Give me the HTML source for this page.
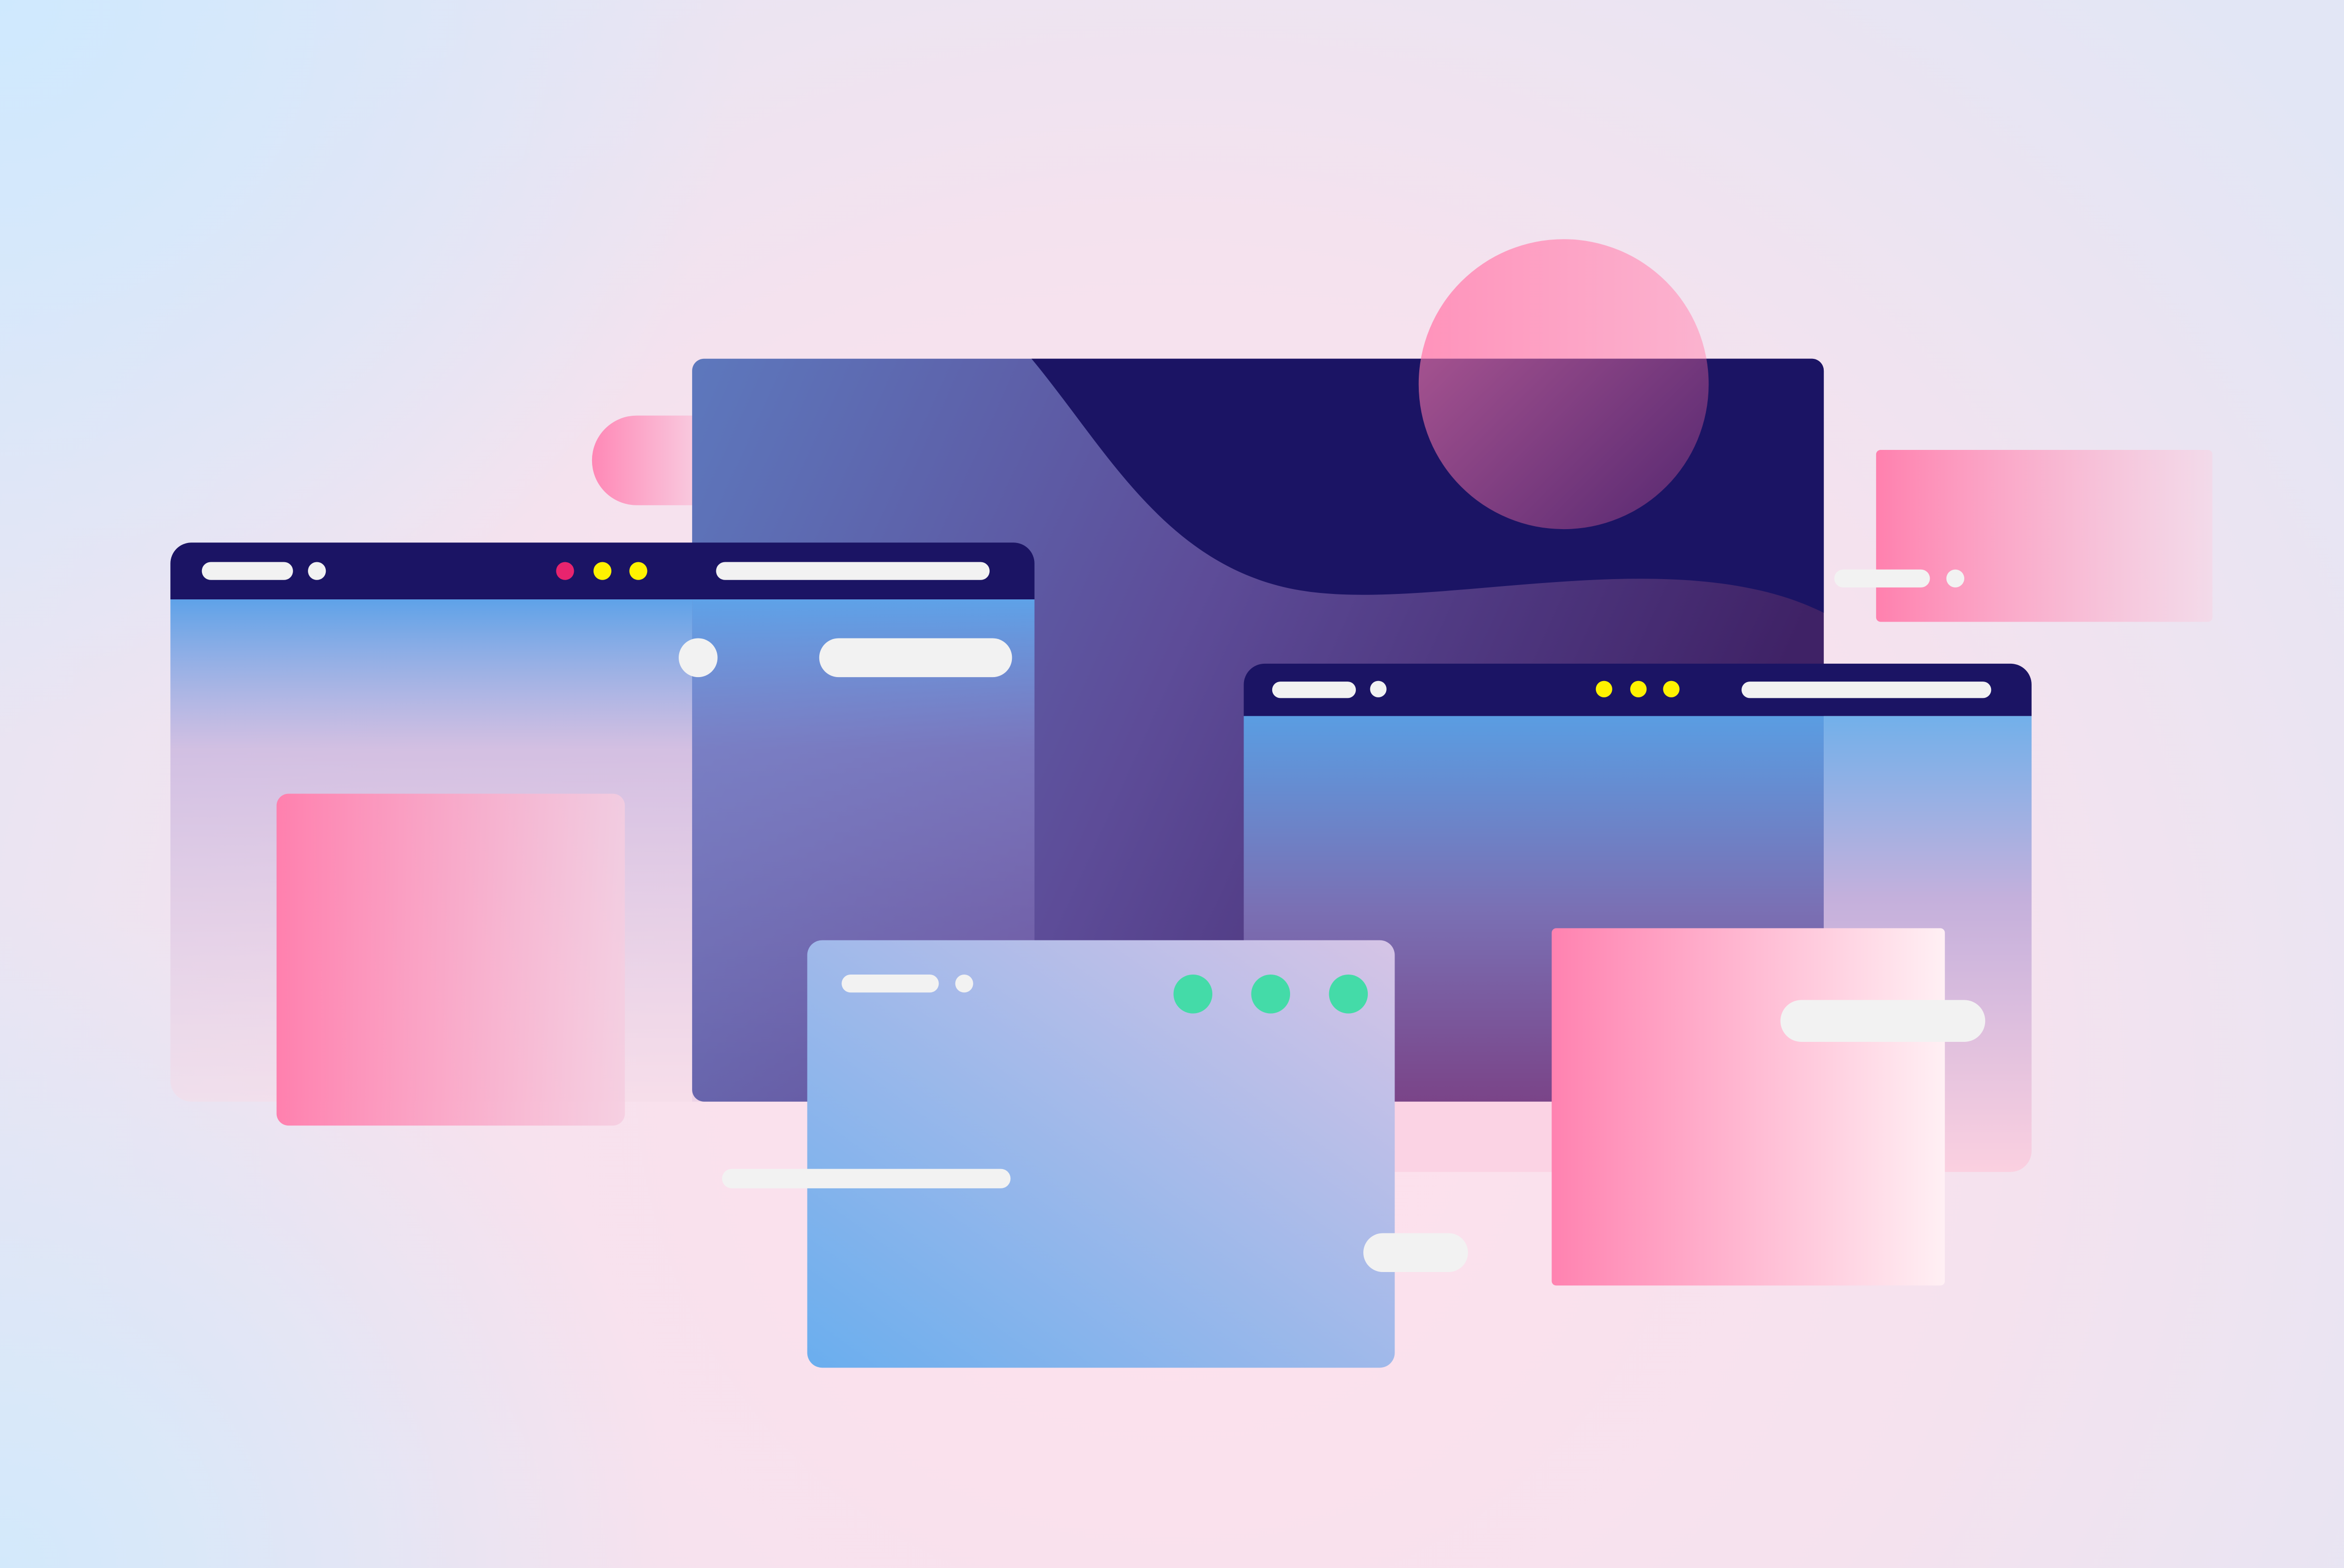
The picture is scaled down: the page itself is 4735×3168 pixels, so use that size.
<!DOCTYPE html>
<html><head><meta charset="utf-8"><style>
html,body{margin:0;padding:0;width:4735px;height:3168px;overflow:hidden}
svg{display:block}
</style></head><body>
<svg width="4735" height="3168" viewBox="0 0 1568 1049" preserveAspectRatio="none" xmlns="http://www.w3.org/2000/svg">
<defs>
<radialGradient id="bg" cx="784" cy="720" r="1000" gradientUnits="userSpaceOnUse">
<stop offset="0" stop-color="#ffe0ec"/><stop offset="0.55" stop-color="#f5e2ee"/><stop offset="1" stop-color="#e2e6f5"/></radialGradient>
<radialGradient id="tl" cx="0" cy="0" r="500" gradientUnits="userSpaceOnUse">
<stop offset="0" stop-color="#cfe9fe"/><stop offset="1" stop-color="#cfe9fe" stop-opacity="0"/></radialGradient>
<radialGradient id="bl" cx="0" cy="1049" r="450" gradientUnits="userSpaceOnUse">
<stop offset="0" stop-color="#d3e9fb"/><stop offset="1" stop-color="#d3e9fb" stop-opacity="0"/></radialGradient>
<linearGradient id="main" x1="0" y1="0" x2="1" y2="0.3">
<stop offset="0" stop-color="#5d78bd"/><stop offset="0.5" stop-color="#5d4c98"/><stop offset="1" stop-color="#3f2266"/></linearGradient>
<linearGradient id="circTop" x1="0" y1="0" x2="1" y2="0"><stop offset="0" stop-color="#ff93bb"/><stop offset="1" stop-color="#fbb3cf"/></linearGradient>
<linearGradient id="circIn" x1="0" y1="0" x2="1" y2="1"><stop offset="0" stop-color="#d46aa0"/><stop offset="1" stop-color="#5e2a72"/></linearGradient>
<linearGradient id="pillL" x1="0" y1="0" x2="1" y2="0"><stop offset="0" stop-color="#ff88b6"/><stop offset="1" stop-color="#f8cfe2"/></linearGradient>
<linearGradient id="lwin" x1="0" y1="0" x2="0" y2="1">
<stop offset="0" stop-color="#5ea2e8" stop-opacity="1"/><stop offset="0.3" stop-color="#c8b4de" stop-opacity="0.75"/><stop offset="1" stop-color="#f5dce8" stop-opacity="0.6"/></linearGradient>
<linearGradient id="lwinO" x1="0" y1="0" x2="0" y2="1">
<stop offset="0" stop-color="#5ea2e8" stop-opacity="1"/><stop offset="0.3" stop-color="#8c8cd0" stop-opacity="0.6"/><stop offset="1" stop-color="#a080c0" stop-opacity="0.15"/></linearGradient>
<linearGradient id="pinkSq" x1="0" y1="0" x2="1" y2="0">
<stop offset="0" stop-color="#ff80ae"/><stop offset="1" stop-color="#f5cde0" stop-opacity="0.85"/></linearGradient>
<linearGradient id="rwinIn" x1="0" y1="0" x2="0" y2="1">
<stop offset="0" stop-color="#5a9de2"/><stop offset="0.5" stop-color="#7a70b4"/><stop offset="1" stop-color="#7a4488"/></linearGradient>
<linearGradient id="rwinOut" x1="0" y1="0" x2="0" y2="1">
<stop offset="0" stop-color="#72b0ea"/><stop offset="0.4" stop-color="#c4b0dc"/><stop offset="1" stop-color="#fbd0e0"/></linearGradient>
<linearGradient id="rtCard" x1="0" y1="0" x2="1" y2="0">
<stop offset="0" stop-color="#ff80ae"/><stop offset="1" stop-color="#f6d6e6" stop-opacity="0.7"/></linearGradient>
<linearGradient id="rbCard" x1="0" y1="0" x2="1" y2="0">
<stop offset="0" stop-color="#ff82b0"/><stop offset="1" stop-color="#fff0f4"/></linearGradient>
<linearGradient id="bwin" x1="0" y1="1" x2="1" y2="0">
<stop offset="0" stop-color="#6aaeee"/><stop offset="1" stop-color="#d6c4e6"/></linearGradient>
</defs>
<rect width="1568" height="1049" fill="url(#bg)"/>
<rect width="1568" height="1049" fill="url(#tl)"/>
<rect width="1568" height="1049" fill="url(#bl)"/>

<!-- left pill -->
<path d="M426 278 H470 V338 H426 A30 30 0 0 1 426 278Z" fill="url(#pillL)"/>

<!-- left window body (outside main) -->
<path d="M114 401 H463 V737 H128 A14 14 0 0 1 114 723Z" fill="url(#lwin)"/>

<!-- main window -->
<rect x="463" y="240" width="757" height="497" rx="8" fill="url(#main)"/>
<path d="M690 240 H1212 A8 8 0 0 1 1220 248 V410 C1120 360 960 410 870 395 C780 380 740 300 690 240Z" fill="#1b1464"/>
<!-- circle -->
<clipPath id="cTop"><rect x="900" y="150" width="300" height="90"/></clipPath>
<clipPath id="cIn"><rect x="900" y="240" width="320" height="130"/></clipPath>
<circle cx="1046" cy="257" r="97" fill="url(#circTop)" clip-path="url(#cTop)"/>
<circle cx="1046" cy="257" r="97" fill="url(#circIn)" clip-path="url(#cIn)" opacity="0.85"/>

<!-- left window overlap body -->
<rect x="463" y="401" width="229" height="336" fill="url(#lwinO)"/>
<!-- left window header -->
<path d="M128 363 H678 A14 14 0 0 1 692 377 V401 H114 V377 A14 14 0 0 1 128 363Z" fill="#1b1464"/>
<rect x="135" y="376" width="61" height="12" rx="6" fill="#f2f2f2"/>
<circle cx="212" cy="382" r="6" fill="#f2f2f2"/>
<circle cx="378" cy="382" r="6" fill="#e8246e"/>
<circle cx="403" cy="382" r="6" fill="#fff200"/>
<circle cx="427" cy="382" r="6" fill="#fff200"/>
<rect x="479" y="376" width="183" height="12" rx="6" fill="#f2f2f2"/>
<rect x="548" y="427" width="129" height="26" rx="13" fill="#f2f2f2"/>
<circle cx="467" cy="440" r="13" fill="#f2f2f2"/>

<!-- pink square left -->
<rect x="185" y="531" width="233" height="222" rx="8" fill="url(#pinkSq)"/>

<!-- right window -->
<rect x="832" y="479" width="388" height="258" fill="url(#rwinIn)"/>
<path d="M1220 479 H1359 V770 A14 14 0 0 1 1345 784 H1220Z" fill="url(#rwinOut)"/>
<rect x="832" y="737" width="388" height="47" fill="#fbd2e2" opacity="0.9"/>
<path d="M846 444 H1345 A14 14 0 0 1 1359 458 V479 H832 V458 A14 14 0 0 1 846 444Z" fill="#1b1464"/>
<rect x="851" y="456" width="56" height="11" rx="5.5" fill="#f2f2f2"/>
<circle cx="922" cy="461" r="5.5" fill="#f2f2f2"/>
<circle cx="1073" cy="461" r="5.5" fill="#fff200"/>
<circle cx="1096" cy="461" r="5.5" fill="#fff200"/>
<circle cx="1118" cy="461" r="5.5" fill="#fff200"/>
<rect x="1165" y="456" width="167" height="11" rx="5.5" fill="#f2f2f2"/>

<!-- right top card -->
<rect x="1255" y="301" width="225" height="115" rx="3" fill="url(#rtCard)"/>
<rect x="1227" y="381" width="64" height="12" rx="6" fill="#f2f2f2"/>
<circle cx="1308" cy="387" r="6" fill="#f2f2f2"/>

<!-- right bottom pink card -->
<rect x="1038" y="621" width="263" height="239" rx="3" fill="url(#rbCard)"/>
<rect x="1191" y="669" width="137" height="28" rx="14" fill="#f2f2f2"/>

<!-- bottom window -->
<rect x="540" y="629" width="393" height="286" rx="10" fill="url(#bwin)"/>
<rect x="563" y="652" width="65" height="12" rx="6" fill="#f2f2f2"/>
<circle cx="645" cy="658" r="6" fill="#f2f2f2"/>
<circle cx="798" cy="665" r="13" fill="#44dba8"/>
<circle cx="850" cy="665" r="13" fill="#44dba8"/>
<circle cx="902" cy="665" r="13" fill="#44dba8"/>
<rect x="483" y="782" width="193" height="13" rx="6.5" fill="#f2f2f2"/>
<rect x="912" y="825" width="70" height="26" rx="13" fill="#f2f2f2"/>
</svg>
</body></html>
